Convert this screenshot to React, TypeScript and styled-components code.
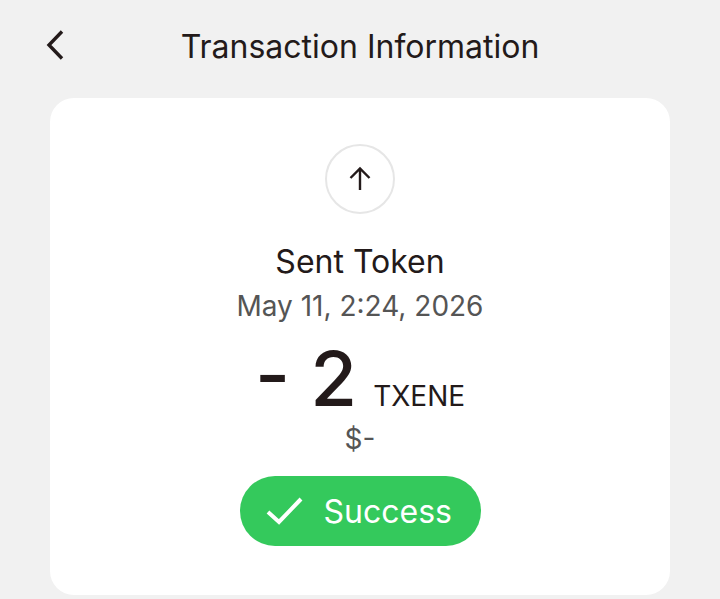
import React from 'react';
import styled, { createGlobalStyle } from 'styled-components';

const GlobalStyle = createGlobalStyle`
  html, body {
    margin: 0;
    padding: 0;
    background: #f1f1f1;
    font-family: Inter, "Noto Sans", sans-serif;
  }
`;

const Page = styled.div`
  width: 720px;
  height: 599px;
  overflow: hidden;
  display: flex;
  flex-direction: column;
  background: #f1f1f1;
`;

const Header = styled.header`
  height: 98px;
  padding: 0 50px 4px;
  box-sizing: border-box;
  display: flex;
  align-items: center;
  justify-content: center;
  position: relative;
`;

const BackButton = styled.button`
  position: absolute;
  left: 44px;
  top: 28px;
  width: 24px;
  height: 34px;
  padding: 0;
  border: 0;
  background: none;
  color: #231a1a;
`;

const Title = styled.h1`
  margin: 0;
  font-size: 32px;
  line-height: 40px;
  font-weight: 400;
  color: #231a1a;
`;

const Card = styled.main`
  width: 620px;
  height: 497px;
  margin-left: 50px;
  padding-top: 46px;
  box-sizing: border-box;
  border-radius: 24px;
  background: #fff;
  display: flex;
  flex-direction: column;
  align-items: center;
`;

const DirectionBadge = styled.div`
  width: 70px;
  height: 70px;
  box-sizing: border-box;
  border: 2px solid #e6e6e6;
  border-radius: 50%;
  display: flex;
  align-items: center;
  justify-content: center;
  color: #231a1a;
`;

const Kind = styled.div`
  margin-top: 27px;
  font-size: 32px;
  line-height: 42px;
  color: #231a1a;
`;

const DateLine = styled.div`
  margin-top: 5px;
  font-size: 28px;
  line-height: 36px;
  color: #555;
`;

const AmountRow = styled.div`
  margin-top: 10px;
  display: flex;
  align-items: baseline;
  color: #231a1a;
`;

const Amount = styled.span`
  font-size: 76px;
  line-height: 88px;
  font-weight: 500;
`;

const Unit = styled.span`
  margin-left: 16px;
  font-size: 28px;
  font-weight: 400;
`;

const Fiat = styled.div`
  font-size: 28px;
  line-height: 34px;
  color: #555;
`;

const StatusPill = styled.div`
  margin-top: 20px;
  width: 241px;
  height: 70px;
  box-sizing: border-box;
  padding-left: 26px;
  border-radius: 35px;
  background: #34c95c;
  color: #fff;
  display: flex;
  align-items: center;
  gap: 21px;
  font-size: 32px;
`;

export default function App() {
  return (
    <Page>
      <GlobalStyle />
      <Header>
        <BackButton aria-label="Back">
          <svg width="24" height="34" viewBox="0 0 24 34" fill="none">
            <path d="M18 3.5 5 17l13 13.5" stroke="currentColor" strokeWidth="3.4" />
          </svg>
        </BackButton>
        <Title>Transaction Information</Title>
      </Header>
      <Card>
        <DirectionBadge>
          <svg width="24" height="26" viewBox="0 0 24 26" fill="none">
            <path d="M12 24V2.5M2.5 12 12 2.5l9.500 9.500" stroke="currentColor" strokeWidth="2.400" />
          </svg>
        </DirectionBadge>
        <Kind>Sent Token</Kind>
        <DateLine>May 11, 2:24, 2026</DateLine>
        <AmountRow>
          <Amount>- 2</Amount>
          <Unit>TXENE</Unit>
        </AmountRow>
        <Fiat>$-</Fiat>
        <StatusPill>
          <svg width="37" height="28" viewBox="0 0 37 28" fill="none">
            <path d="M2 15l11 10L35 2" stroke="currentColor" strokeWidth="4" />
          </svg>
          Success
        </StatusPill>
      </Card>
    </Page>
  );
}
